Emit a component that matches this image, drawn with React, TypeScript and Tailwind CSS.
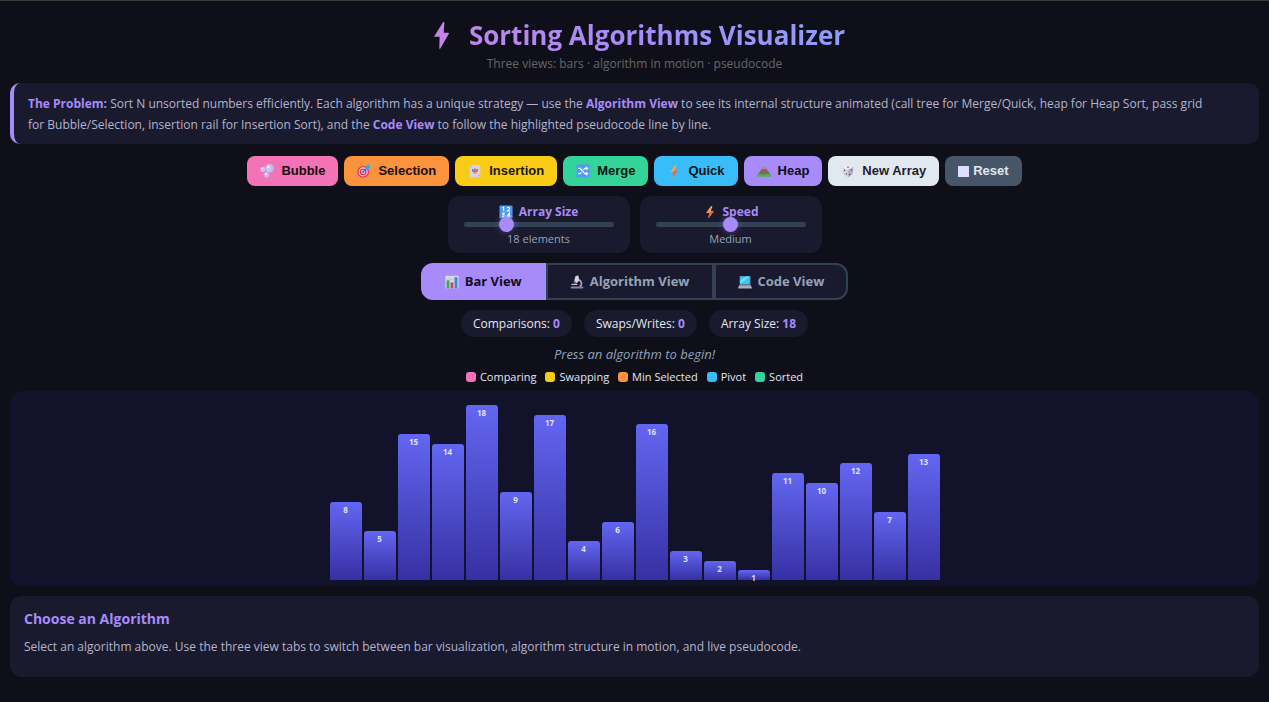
import { useState } from "react";
import type { ReactNode } from "react";

const STYLES = {
    PAGE: "min-h-screen border-t border-[#3a3d3a] bg-[#0f0f1a] px-[10px] pt-4 pb-6 font-['Open_Sans',sans-serif] text-[#e2e8f0]",
    TITLE: "flex items-center justify-center gap-5 bg-linear-to-r from-[#f472b6] via-[#a78bfa] to-[#38bdf8] bg-clip-text pl-[10px] text-[26px] leading-9 font-bold text-transparent",
    SUBTITLE: "text-center text-[12px] leading-[22px] text-[#666666]",
    PROBLEM: "mt-2 rounded-[10px] border-l-4 border-[#a78bfa] bg-[#1a1a2e] pt-[10px] pr-10 pb-[9px] pl-[14px] text-[12px] leading-[21px] text-[#b4b4cc]",
    STRONG: "font-bold text-[#a78bfa]",
    ACTIONS: "mt-3 flex flex-wrap justify-center gap-[6px]",
    ACTION: "flex h-[30px] cursor-pointer items-center rounded-lg px-[13px] font-['Liberation_Sans',sans-serif] text-[13px] font-bold",
    SLIDER_CARD: "flex flex-col items-center rounded-xl bg-[#1a1a2e] px-4 pt-2 pb-[6px] leading-4",
    SLIDER_LABEL: "flex items-center gap-[6px] text-[12px] font-bold text-[#a78bfa]",
    SLIDER_VALUE: "text-[11px] text-[#94a3b8]",
    SLIDER: "relative mt-[2px] mb-1 h-[5px] w-[150px] cursor-pointer appearance-none rounded-full bg-[#334155] outline-none [&::-webkit-slider-thumb]:size-[15px] [&::-webkit-slider-thumb]:appearance-none [&::-webkit-slider-thumb]:rounded-full [&::-webkit-slider-thumb]:bg-[#a78bfa] [&::-webkit-slider-thumb]:shadow-[0_0_6px_rgba(167,139,250,0.4)]",
    TAB: "flex h-[37px] cursor-pointer items-center gap-[6px] border-2 px-[22px] text-[13px] font-bold first:rounded-l-xl last:rounded-r-xl",
    TAB_ACTIVE: "border-[#a78bfa] bg-[#a78bfa] text-[#0f0f1a]",
    TAB_IDLE: "border-[#334155] bg-[#1a1a2e] text-[#94a3b8]",
    STAT: "rounded-full bg-[#1a1a2e] px-3 pt-px text-[12px] leading-[26px]",
    CHART: "mt-[6px] flex h-[195px] items-end justify-center gap-[2px] rounded-xl bg-[#12122a] pb-[6px]",
    BAR: "w-8 rounded-t-[3px] bg-linear-to-b from-[#6366f1] to-[#3730a3] pt-[3px] text-center text-[8px] leading-[10px] font-bold text-white/80",
    INFO: "mt-[10px] rounded-xl bg-[#1a1a2e] px-[14px] pt-3 pb-5",
};

const Icon = ({ size = 14, children }: { size?: number; children: ReactNode }) => (
    <svg width={size} height={size} viewBox="0 0 16 16" aria-hidden="true" className="shrink-0">
        {children}
    </svg>
);

const BubblesIcon = () => (
    <Icon>
        <circle cx="11" cy="5" r="4.6" fill="#c9c6ef" />
        <path d="M11 .4a4.6 4.6 0 0 1 4.6 4.6c0 2-1.6 4-3.6 4.5C14 7 14 3 11 .4Z" fill="#9fc3ee" />
        <circle cx="3.4" cy="6" r="3" fill="#d9b9ec" />
        <circle cx="7.5" cy="12.3" r="3.2" fill="#cdb2ee" />
        <circle cx="9.6" cy="3.5" r="1.3" fill="#f6f2ff" />
        <circle cx="2.6" cy="5.2" r=".9" fill="#fff" />
        <circle cx="6.7" cy="11.4" r="1" fill="#fff" />
    </Icon>
);

const TargetIcon = () => (
    <Icon>
        <circle cx="7" cy="9" r="6.8" fill="#e0355f" />
        <circle cx="7" cy="9" r="5.2" fill="#f5dfea" />
        <circle cx="7" cy="9" r="3.9" fill="#e0355f" />
        <circle cx="7" cy="9" r="2.3" fill="#f5dfea" />
        <circle cx="7" cy="9" r="1.2" fill="#e0355f" />
        <path d="m7 9 5-5" stroke="#2f6fae" strokeWidth="1.3" />
        <path d="M9.8 6V3L13.3 0l.5 2.1 2.2.5L13 6Z" fill="#3ba7ee" />
    </Icon>
);

const JokerIcon = () => (
    <Icon>
        <rect x="2" y="1" width="12" height="14" rx="1.2" fill="#d6d4e2" />
        <path d="M4.5 5 6.5 6.6 8 4.5l1.5 2.1 2-1.6-.8 4.2H5.3Z" fill="#e0588f" />
        <path d="M5.6 9h4.8L9.3 11.5H6.7Z" fill="#f2a33c" />
        <path d="M4.2 5.5 6.4 7 5.3 8.8ZM11.8 5.5 9.6 7l1.1 1.8Z" fill="#4b86d8" />
        <circle cx="3.6" cy="2.7" r=".6" fill="#8d86a5" />
        <circle cx="12.4" cy="13.3" r=".6" fill="#8d86a5" />
    </Icon>
);

const ShuffleIcon = () => (
    <Icon>
        <rect x=".5" y=".5" width="15" height="15" rx="2" fill="#4f9df0" />
        <path
            d="M2.5 5h2.3l5.2 6h2.5M2.5 11h2.3L6 9.6M8.5 6.6 10 5h2.5M11.4 3.2 13.3 5l-1.9 1.8M11.4 9.2l1.9 1.8-1.9 1.8"
            fill="none"
            stroke="#fff"
            strokeWidth="1.3"
        />
    </Icon>
);

const BoltIcon = () => (
    <Icon>
        <path d="M9.2 1 3.5 9h3.7L6 15.5 12.5 7H9L10.8 1Z" fill="#f9a04f" />
        <path d="M7.5 8 12.5 7 6 15.5 7.2 9Z" fill="#e8614a" />
    </Icon>
);

const MountainIcon = () => (
    <Icon>
        <path d="M.5 13.5 5.8 4.5l1.7-1.6 1.8.5 6.2 8.6v2Z" fill="#8b6057" />
        <path d="m5.8 4.5 1.7-1.6 1.8.5 1.5 2.2-1.6.7-1.3-.8-2.2 1Z" fill="#b58e80" />
        <path d="M.3 12c3-1.5 5 .6 8 0s5-1.2 7.4-.4v3.1H.3Z" fill="#43b35c" />
    </Icon>
);

const DieIcon = () => (
    <Icon>
        <path d="m8 1 6 2.5-.8 8L8.3 15.5 2.6 12 1.8 4Z" fill="#d6d1df" />
        <path d="m8 1 6 2.5-5.8 3L1.8 4Z" fill="#f1eef5" />
        <path d="m8.2 6.5 5.8-3-.8 8-4.9 4Z" fill="#b4adc4" />
        <ellipse cx="8" cy="3.6" rx="1.3" ry=".8" fill="#d8405f" />
        <circle cx="4" cy="7.3" r=".8" fill="#4a4260" />
        <circle cx="6.2" cy="11.3" r=".8" fill="#4a4260" />
        <circle cx="12.3" cy="6.8" r=".8" fill="#4a4260" />
        <circle cx="9.9" cy="12" r=".8" fill="#4a4260" />
    </Icon>
);

const NumbersIcon = () => (
    <Icon>
        <rect x=".5" y=".5" width="15" height="15" rx="1.5" fill="#4b9cf0" />
        <path
            d="m4 3.5 1.3-1V7M9.5 3.3c1-1.2 3-.5 2.5 1L9.6 6.7h2.9M3.4 9.5h2.5L4.6 11c1.7 0 1.7 2.5-.2 2.5H3.3M11.8 14V9.3L9.4 12.5h3.5"
            fill="none"
            stroke="#fff"
            strokeWidth="1.2"
        />
    </Icon>
);

const ChartIcon = () => (
    <Icon>
        <rect x=".5" y=".8" width="15" height="14.5" rx="1" fill="#dcdbe3" />
        <path d="M.5 5h15M.5 9.5h15M5.5.8v14.5M10.5.8v14.5" stroke="#b9b8c6" strokeWidth=".6" />
        <rect x="1.8" y="6" width="3.2" height="9.3" fill="#2fae62" />
        <rect x="6.4" y="8.5" width="3.2" height="6.8" fill="#e23a5e" />
        <rect x="11" y="2.5" width="3.2" height="12.8" fill="#2f8be6" />
    </Icon>
);

const MicroscopeIcon = () => (
    <Icon>
        <path d="M9 5.5c4.5.5 5.5 5.5 2 8" fill="none" stroke="#a9a6bd" strokeWidth="1.8" />
        <path d="M6.3 1.2 9.6.5l1 5.8-3 3-2.8-2.8Z" fill="#d5d3e0" />
        <path d="m4.8 6.5 2.8 2.8-1.8 1L3.9 8.6Z" fill="#6d6885" />
        <path d="M1.5 10.8h7" stroke="#c7c4d6" strokeWidth="1.3" />
        <rect x=".8" y="13" width="14.4" height="2.4" rx=".8" fill="#8f7fb4" />
    </Icon>
);

const LaptopIcon = () => (
    <Icon>
        <rect x="1.8" y="1" width="12.4" height="10" rx=".8" fill="#3a8fb8" />
        <path d="M2.6 1.8h10.8v8.4H2.6Z" fill="#3cc6f4" />
        <path d="M2.6 10.2V6L9 1.8h4.4Z" fill="#6fdcfb" />
        <path d="M1.8 11h12.4l1.5 3.4v.9H.3v-.9Z" fill="#b3afc0" />
        <path d="M2.5 12.3h11" stroke="#7f7a92" strokeWidth=".9" />
    </Icon>
);

const SquareIcon = () => (
    <svg width="11" height="11" viewBox="0 0 11 11" aria-hidden="true">
        <rect width="11" height="11" rx=".5" fill="#dedcff" />
    </svg>
);

const ACTIONS = [
    { label: "Bubble", icon: <BubblesIcon />, color: "gap-[7px] bg-[#f472b6] text-[#1a0a14]" },
    { label: "Selection", icon: <TargetIcon />, color: "gap-[7px] bg-[#fb923c] text-[#1a0f05]" },
    { label: "Insertion", icon: <JokerIcon />, color: "gap-[7px] bg-[#facc15] text-[#1a1505]" },
    { label: "Merge", icon: <ShuffleIcon />, color: "gap-[7px] bg-[#34d399] text-[#05180f]" },
    { label: "Quick", icon: <BoltIcon />, color: "gap-[7px] bg-[#38bdf8] text-[#05141c]" },
    { label: "Heap", icon: <MountainIcon />, color: "gap-[7px] bg-[#a78bfa] text-[#0f0a1a]" },
    { label: "New Array", icon: <DieIcon />, color: "gap-[7px] bg-[#e2e8f0] text-[#1e1e2e]" },
    { label: "Reset", icon: <SquareIcon />, color: "gap-1 bg-[#475569] text-[#e2e8f0]" },
];

const TABS = [
    { label: "Bar View", icon: <ChartIcon /> },
    { label: "Algorithm View", icon: <MicroscopeIcon /> },
    { label: "Code View", icon: <LaptopIcon /> },
];

const LEGEND = [
    { label: "Comparing", color: "bg-[#f472b6]" },
    { label: "Swapping", color: "bg-[#facc15]" },
    { label: "Min Selected", color: "bg-[#fb923c]" },
    { label: "Pivot", color: "bg-[#38bdf8]" },
    { label: "Sorted", color: "bg-[#34d399]" },
];

const SPEEDS = ["Very Slow", "Slow", "Medium", "Fast", "Very Fast"];
const VALUES = [8, 5, 15, 14, 18, 9, 17, 4, 6, 16, 3, 2, 1, 11, 10, 12, 7, 13];
const MAX_BAR_HEIGHT = 175;

const shuffled = (n: number) => {
    const arr = Array.from({ length: n }, (_, i) => i + 1);
    for (let i = n - 1; i > 0; i--) {
        const j = Math.floor(Math.random() * (i + 1));
        [arr[i], arr[j]] = [arr[j], arr[i]];
    }
    return arr;
};

const App = () => {
    const [values, setValues] = useState(VALUES);
    const [speed, setSpeed] = useState(3);
    const [tab, setTab] = useState("Bar View");

    const stats = [
        { label: "Comparisons", value: 0 },
        { label: "Swaps/Writes", value: 0 },
        { label: "Array Size", value: values.length },
    ];

    const handleAction = (label: string) => {
        if (label === "New Array") setValues(shuffled(values.length));
        if (label === "Reset") setValues(VALUES);
    };

    return (
        <div className={STYLES.PAGE}>
            <h1 className={STYLES.TITLE}>
                <svg width="15" height="27" viewBox="0 0 15 27" aria-hidden="true">
                    <path d="M9 .3 0 14.8h5.6L5.3 26.5q.5.8 1 0L15 11.4q.1-.6-.6-.6H9.7L10.4.5Q9.7-.4 9 .3Z" fill="#c583e6" />
                </svg>
                Sorting Algorithms Visualizer
            </h1>
            <p className={STYLES.SUBTITLE}>Three views: bars · algorithm in motion · pseudocode</p>

            <p className={STYLES.PROBLEM}>
                <strong className={STYLES.STRONG}>The Problem:</strong> Sort N unsorted numbers efficiently. Each
                algorithm has a unique strategy — use the <strong className={STYLES.STRONG}>Algorithm View</strong> to
                see its internal structure animated (call tree for Merge/Quick, heap for Heap Sort, pass grid for
                Bubble/Selection, insertion rail for Insertion Sort), and the{" "}
                <strong className={STYLES.STRONG}>Code View</strong> to follow the highlighted pseudocode line by line.
            </p>

            <div className={STYLES.ACTIONS}>
                {ACTIONS.map(({ label, icon, color }) => (
                    <button key={label} type="button" onClick={() => handleAction(label)} className={`${STYLES.ACTION} ${color}`}>
                        {icon}
                        {label}
                    </button>
                ))}
            </div>

            <div className="mt-[10px] flex flex-wrap justify-center gap-[10px]">
                <div className={STYLES.SLIDER_CARD}>
                    <label htmlFor="size" className={STYLES.SLIDER_LABEL}>
                        <NumbersIcon />
                        Array Size
                    </label>
                    <input
                        id="size"
                        type="range"
                        min={5}
                        max={55}
                        value={values.length}
                        onChange={(e) => setValues(shuffled(Number(e.target.value)))}
                        className={STYLES.SLIDER}
                    />
                    <span className={STYLES.SLIDER_VALUE}>{values.length} elements</span>
                </div>
                <div className={STYLES.SLIDER_CARD}>
                    <label htmlFor="speed" className={STYLES.SLIDER_LABEL}>
                        <BoltIcon />
                        Speed
                    </label>
                    <input
                        id="speed"
                        type="range"
                        min={1}
                        max={5}
                        value={speed}
                        onChange={(e) => setSpeed(Number(e.target.value))}
                        className={STYLES.SLIDER}
                    />
                    <span className={STYLES.SLIDER_VALUE}>{SPEEDS[speed - 1]}</span>
                </div>
            </div>

            <div className="mt-[10px] flex justify-center">
                {TABS.map(({ label, icon }) => (
                    <button
                        key={label}
                        type="button"
                        onClick={() => setTab(label)}
                        className={`${STYLES.TAB} ${tab === label ? STYLES.TAB_ACTIVE : STYLES.TAB_IDLE}`}
                    >
                        {icon}
                        {label}
                    </button>
                ))}
            </div>

            <div className="mt-[10px] flex flex-wrap justify-center gap-3">
                {stats.map(({ label, value }) => (
                    <div key={label} className={STYLES.STAT}>
                        {label}: <span className={STYLES.STRONG}>{value}</span>
                    </div>
                ))}
            </div>

            <p className="mt-[7px] text-center text-[13px] leading-5 text-[#94a3b8] italic">Press an algorithm to begin!</p>

            <div className="mt-[5px] flex flex-wrap justify-center gap-[9px] text-[11px] leading-4">
                {LEGEND.map(({ label, color }) => (
                    <div key={label} className="flex items-center gap-1">
                        <span className={`size-[10px] rounded-[3px] ${color}`} />
                        {label}
                    </div>
                ))}
            </div>

            <div className={STYLES.CHART}>
                {values.map((v) => (
                    <div
                        key={v}
                        className={STYLES.BAR}
                        style={{ height: Math.round((v / values.length) * MAX_BAR_HEIGHT) }}
                    >
                        {v}
                    </div>
                ))}
            </div>

            <section className={STYLES.INFO}>
                <h2 className="text-[14px] leading-[22px] font-bold text-[#a78bfa]">Choose an Algorithm</h2>
                <p className="mt-[6px] text-[12px] leading-[21px] text-[#b4b4cc]">
                    Select an algorithm above. Use the three view tabs to switch between bar visualization, algorithm
                    structure in motion, and live pseudocode.
                </p>
            </section>
        </div>
    );
};

export default App;
